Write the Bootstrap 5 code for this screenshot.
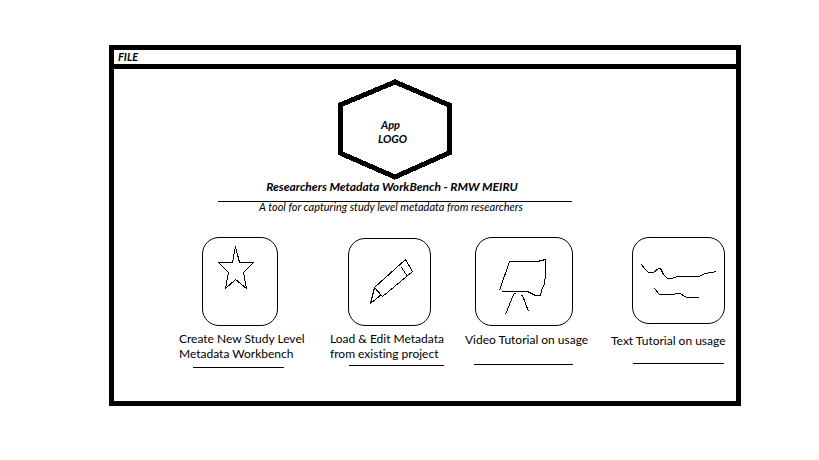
<!DOCTYPE html>
<html lang="en">
<head>
<meta charset="utf-8">
<meta name="viewport" content="width=device-width, initial-scale=1">
<title>Researchers Metadata WorkBench</title>
<link href="https://cdn.jsdelivr.net/npm/bootstrap@5.3.0/dist/css/bootstrap.min.css" rel="stylesheet">
<style>
body { font-family: Lato, "Open Sans", sans-serif; font-variant-ligatures: none; font-size: 12px; line-height: 15px; color: #000; background: #fff; padding: 45px 78px 45px 109px; }
.app-frame { border: 5px solid #000; padding-bottom: 33px; }
.menu-bar { border-bottom: 5px solid #000; }
.menu-item { font-size: 11px; line-height: 14px; padding: 0 4px; }
.intro { padding-right: 60px; padding-top: 9px; }
.logo { width: 116px; height: 102px; }
.logo text { font-size: 11px; font-weight: 700; font-style: italic; }
svg { display: block; fill: none; stroke: #000; stroke-width: 1; shape-rendering: crispEdges; }
svg text { fill: #000; stroke: none; }
.app-title { font-size: 12px; line-height: 14px; padding-right: 6px; }
.title-rule { width: 354px; border-bottom: 1px solid #000; padding-bottom: 7px; }
.tagline { font-size: 11px; line-height: 10px; padding-right: 8px; }
.tiles { display: grid; grid-template-columns: 151fr 135fr 146fr 125fr; padding-left: 65px; padding-top: 25px; }
.tile-btn { border: 1px solid #000; border-radius: 17px; height: 89px; }
.tile-btn svg { width: 100%; height: 100%; }
.caption { margin-top: 5px; min-height: 30px; }
.rule { height: 1px; background: #000; margin-top: 6px; }
.t-new .tile-btn { width: 76px; margin-left: 23px; }
.t-new .rule { width: 91px; margin-left: 14px; }
.t-edit .tile-btn { width: 83px; height: 88px; margin-left: 18px; margin-top: 1px; }
.t-edit .rule { width: 95px; margin-left: 19px; margin-top: 4px; }
.t-video .tile-btn { width: 98px; margin-left: 10px; }
.t-video .caption { margin-top: 6px; }
.t-video .rule { width: 99px; margin-left: 9px; margin-top: 2px; }
.t-text .tile-btn { width: 93px; height: 87px; margin-left: 21px; }
.t-text .caption { margin-top: 9px; }
.t-text .rule { width: 91px; margin-left: 22px; margin-top: 0; }
</style>
</head>
<body>
<main class="app-frame">
  <nav class="menu-bar d-flex" aria-label="Menu">
    <button type="button" class="menu-item border-0 bg-transparent text-black fw-bold fst-italic">FILE</button>
  </nav>
  <header class="intro d-flex flex-column align-items-center text-center">
    <svg class="logo" viewBox="0 0 116 102" role="img" aria-label="App logo">
      <path d="M58 4 L112 27 V75 L58 99 L3 75 V27 Z" stroke-width="5"/>
      <text x="44" y="51">App</text>
      <text x="41" y="65">LOGO</text>
    </svg>
    <div class="title-rule"><h1 class="app-title fw-bold fst-italic m-0">Researchers Metadata WorkBench - RMW MEIRU</h1></div>
    <p class="tagline fst-italic m-0">A tool for capturing study level metadata from researchers</p>
  </header>
  <section class="tiles text-nowrap" aria-label="Actions">
    <div class="t-new">
      <button type="button" class="tile-btn d-block bg-transparent p-0" aria-labelledby="c1">
        <svg viewBox="203 238 74 87"><path d="M235.500 246.500 L239.500 262.500 H253.500 L243.500 272.500 L246.500 288.500 L235.500 279.500 L225.500 288.500 L228.500 272.500 L218.500 262.500 H232.500 Z"/></svg>
      </button>
      <div class="caption" id="c1">Create New Study Level<br>Metadata Workbench</div>
      <div class="rule"></div>
    </div>
    <div class="t-edit">
      <button type="button" class="tile-btn d-block bg-transparent p-0" aria-labelledby="c2">
        <svg viewBox="349 239 81 86"><path d="M374.500 287.500 L405.500 259.500 L412.500 271.500 L382.500 296.500 Z M374.500 287.500 L370.500 303.500 L381.500 294.500 M401.500 267.500 L407.500 276.500"/></svg>
      </button>
      <div class="caption" id="c2">Load &amp; Edit Metadata<br>from existing project</div>
      <div class="rule"></div>
    </div>
    <div class="t-video">
      <button type="button" class="tile-btn d-block bg-transparent p-0" aria-labelledby="c3">
        <svg viewBox="476 238 96 87"><path d="M499.500 290.500 L509.500 261.500 H537.500 L541.500 260.500 L545.500 259.500 V273.500 L544.500 284.500 L542.500 287.500 L540.500 295.500 H535.500 L527.500 291.500 H501.500 M516.500 292.500 L513.500 294.500 L505.500 314.500 M520.500 295.500 H522.500 L528.500 311.500"/></svg>
      </button>
      <div class="caption" id="c3">Video Tutorial on usage</div>
      <div class="rule"></div>
    </div>
    <div class="t-text">
      <button type="button" class="tile-btn d-block bg-transparent p-0" aria-labelledby="c4">
        <svg viewBox="633 238 91 85"><path d="M641.500 264.500 L644.500 268.500 L648.500 272.500 H653.500 L658.500 268.500 H660.500 L663.500 274.500 L667.500 278.500 H671.500 L677.500 276.500 H699.500 L704.500 273.500 L711.500 272.500 L716.500 271.500 M654.500 288.500 L659.500 294.500 H673.500 L676.500 293.500 H680.500 L684.500 296.500 L687.500 297.500 H698.500"/></svg>
      </button>
      <div class="caption" id="c4">Text Tutorial on usage</div>
      <div class="rule"></div>
    </div>
  </section>
</main>
<script src="https://cdn.jsdelivr.net/npm/bootstrap@5.3.0/dist/js/bootstrap.bundle.min.js"></script>
</body>
</html>
